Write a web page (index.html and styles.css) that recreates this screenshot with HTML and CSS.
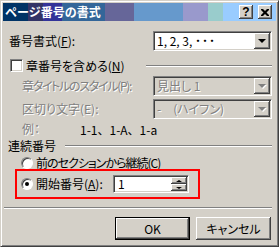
FILE: index.html
```html
<!DOCTYPE html>
<html lang="ja">
<head>
    <meta charset="utf-8">
    <title>ページ番号の書式</title>
    <link rel="stylesheet" href="styles.css">
</head>

<body>
    <div class="window">
        <div class="titlebar">
            <span class="title">ページ番号の書式</span>
            <span class="caption-btn help">?</span>
            <span class="caption-btn close">
                <svg width="8" height="7" viewBox="0 0 8 7">
                    <path d="M0 0h2l2 2 2-2h2v1l-2.5 2.5L8 6v1H6L4 5 2 7H0V6l2.5-2.5L0 1z" fill="#000"/>
                </svg>
            </span>
        </div>

        <div class="content">
            <div class="row format-row">
                <span class="label">番号書式(<u>F</u>):</span>
                <div class="combo">
                    <span class="combo-text">1, 2, 3, <b class="dots">･･･</b></span>
                    <span class="drop-btn"><i class="arrow"></i></span>
                </div>
            </div>

            <div class="row group-row">
                <span class="checkbox"></span>
                <span class="check-label">章番号を含める(<u>N</u>)</span>
                <span class="etched chapter-line"></span>
            </div>

            <div class="row sub-row">
                <span class="label disabled indent tight">章タイトルのスタイル(P):</span>
                <div class="combo off">
                    <span class="combo-text">見出し 1</span>
                    <span class="drop-btn"><i class="arrow"></i></span>
                </div>
            </div>

            <div class="row sub-row">
                <span class="label disabled indent">区切り文字(E):</span>
                <div class="combo off">
                    <span class="combo-text">-　(ハイフン)</span>
                    <span class="drop-btn"><i class="arrow"></i></span>
                </div>
            </div>

            <div class="row example-row">
                <span class="label disabled indent example-label">例：</span>
                <span class="example">1-1、1-A、1-a</span>
            </div>

            <div class="row section-row">
                <span class="label section-label">連続番号</span>
                <span class="etched section-line"></span>
            </div>

            <div class="row radio-row">
                <span class="radio"></span>
                <span class="radio-label tighter">前のセクションから継続(C)</span>
            </div>

            <div class="highlight">
                <span class="radio checked"></span>
                <span class="radio-label">開始番号(<u>A</u>):</span>
                <div class="spin">
                    <span class="spin-text">1</span>
                    <span class="spin-btns">
                        <span class="spin-btn"><i class="arrow up"></i></span>
                        <span class="spin-btn"><i class="arrow"></i></span>
                    </span>
                </div>
            </div>

            <div class="etched bottom-line"></div>

            <div class="buttons">
                <span class="button default">OK</span>
                <span class="button">キャンセル</span>
            </div>
        </div>
    </div>
</body>

</html>
```

FILE: styles.css
```css
* {
    box-sizing: border-box;
}

body {
    margin: 0;
    font-family: "Noto Sans CJK JP", "Noto Sans", sans-serif;
    font-size: 12px;
    font-feature-settings: "palt";
    color: #000;
    background: #d4d0c8;
}

:root {
    --face: #d4d0c8;
    --shadow: #808080;
    --dark: #404040;
}

.window {
    width: 279px;
    height: 247px;
    display: flex;
    flex-direction: column;
    padding: 2px;
    background: var(--face);
    border: 1px solid;
    border-color: var(--face) var(--dark) var(--dark) var(--face);
    box-shadow: inset 1px 1px #fff, inset -1px -1px var(--shadow);
}

/* title bar: dithered caption gradient */
.titlebar {
    height: 18px;
    display: flex;
    align-items: center;
    padding: 0 4px 0 2px;
    background: linear-gradient(to right,
            #003366 0 25px, #333366 25px 40px, #333399 40px 59px,
            #336699 59px 102px, #666699 102px 131px, #6699cc 131px 180px,
            #9999cc 180px 205px, #99cccc 205px 220px, #99ccff 220px);
}

.title {
    color: #fff;
    font-weight: bold;
    line-height: 14px;
    font-feature-settings: normal;
}

.caption-btn {
    width: 14px;
    height: 14px;
    display: flex;
    justify-content: center;
    align-items: center;
    background: var(--face);
    box-shadow: inset -1px -1px var(--dark), inset 1px 1px #fff,
        inset -2px -2px var(--shadow);
    font-family: "Liberation Sans", sans-serif;
    font-weight: bold;
    font-size: 12px;
    line-height: 1;
}

.help {
    margin-left: auto;
}

.close {
    margin-left: 5px;
}

.content {
    flex: 1;
    display: flex;
    flex-direction: column;
}

.row {
    display: flex;
    align-items: center;
    padding-right: 4px;
}

.label {
    white-space: nowrap;
    line-height: 14px;
}

.tight {
    letter-spacing: -1.3px;
}

.tighter {
    letter-spacing: -1px;
}

.disabled {
    color: var(--shadow);
    text-shadow: 1px 1px #fff;
}

.indent {
    padding-left: 19px;
}

.format-row {
    margin-top: 10px;
    height: 20px;
    padding-left: 6px;
}

.combo {
    margin-left: auto;
    width: 119px;
    height: 20px;
    display: flex;
    align-items: center;
    background: #fff;
    border: 1px solid;
    border-color: var(--shadow) #fff #fff var(--shadow);
    box-shadow: inset 1px 1px var(--dark), inset -1px -1px var(--face);
    padding: 1px;
}

.combo.off {
    background: var(--face);
    color: var(--shadow);
    text-shadow: 1px 1px #fff;
}

.combo-text {
    flex: 1;
    padding-left: 2px;
    white-space: nowrap;
    line-height: 14px;
}

.dots {
    letter-spacing: 1px;
}

.drop-btn,
.spin-btn {
    width: 16px;
    height: 16px;
    display: flex;
    justify-content: center;
    align-items: center;
    background: var(--face);
    box-shadow: inset -1px -1px var(--dark), inset 1px 1px #fff,
        inset -2px -2px var(--shadow);
}

.arrow {
    width: 0;
    height: 0;
    border-left: 4px solid transparent;
    border-right: 4px solid transparent;
    border-top: 4px solid #000;
}

.arrow.up {
    border-top: 0;
    border-bottom: 3px solid #000;
}

.off .arrow {
    border-top-color: var(--shadow);
    filter: drop-shadow(1px 1px 0 #fff);
}

.group-row {
    margin-top: 7px;
    height: 15px;
}

.checkbox {
    width: 13px;
    height: 13px;
    margin-left: 7px;
    background: #fff;
    border: 1px solid;
    border-color: var(--shadow) #fff #fff var(--shadow);
    box-shadow: inset 1px 1px var(--dark), inset -1px -1px var(--face);
}

.check-label {
    margin-left: 3px;
    white-space: nowrap;
}

.etched {
    height: 2px;
    border-top: 1px solid var(--shadow);
    border-bottom: 1px solid #fff;
}

.chapter-line {
    margin-left: auto;
    width: 126px;
}

.sub-row {
    margin-top: 3px;
    height: 20px;
}

.example-row {
    margin-top: 2px;
    height: 16px;
}

.example-label {
    width: 77px;
}

.example {
    font-feature-settings: normal;
}

.section-row {
    margin-top: 2px;
    height: 14px;
    padding-left: 5px;
}

.section-line {
    margin-left: auto;
    width: 207px;
}

.radio-row {
    margin-top: 3px;
    height: 13px;
}

.radio {
    position: relative;
    width: 12px;
    height: 12px;
    margin-left: 18px;
    border-radius: 50%;
    background: #fff;
    border: 1px solid;
    border-color: var(--shadow) #fff #fff var(--shadow);
    box-shadow: inset 1px 1px var(--dark);
}

.radio.checked::after {
    content: "";
    position: absolute;
    left: 3px;
    top: 3px;
    width: 4px;
    height: 4px;
    border-radius: 50%;
    background: #000;
}

.radio-label {
    margin-left: 3px;
    white-space: nowrap;
    line-height: 14px;
}

/* red annotation frame around the start number row */
.highlight {
    margin-left: 12px;
    width: 185px;
    height: 30px;
    display: flex;
    align-items: center;
    border: 2px solid #f00;
    padding: 0 9px 0 0;
}

.highlight .radio {
    margin-left: 4px;
}

.spin {
    margin-left: auto;
    width: 76px;
    height: 18px;
    display: flex;
    align-items: center;
    background: #fff;
    border: 1px solid;
    border-color: var(--shadow) #fff #fff var(--shadow);
    box-shadow: inset 1px 1px var(--dark), inset -1px -1px var(--face);
    padding: 1px;
}

.spin-text {
    flex: 1;
    padding-left: 3px;
    line-height: 14px;
}

.spin-btns {
    display: flex;
    flex-direction: column;
}

.spin-btn {
    height: 7px;
}

.spin-btn .arrow {
    border-left-width: 3px;
    border-right-width: 3px;
    border-top-width: 2px;
}

.spin-btn .arrow.up {
    border-top-width: 0;
    border-bottom-width: 2px;
}

.bottom-line {
    margin: 8px 4px 0 1px;
}

.buttons {
    margin-top: 8px;
    display: flex;
    justify-content: flex-end;
    gap: 6px;
    padding-right: 5px;
}

.button {
    width: 75px;
    height: 23px;
    display: flex;
    justify-content: center;
    align-items: center;
    background: var(--face);
    box-shadow: inset -1px -1px var(--dark), inset 1px 1px #fff,
        inset -2px -2px var(--shadow);
}

.button.default {
    border: 1px solid #000;
}
```
